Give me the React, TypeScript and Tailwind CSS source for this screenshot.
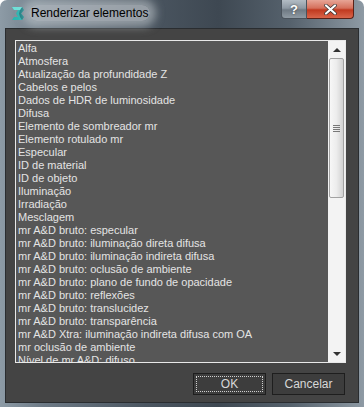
import React from 'react';

const items = [
  'Alfa',
  'Atmosfera',
  'Atualização da profundidade Z',
  'Cabelos e pelos',
  'Dados de HDR de luminosidade',
  'Difusa',
  'Elemento de sombreador mr',
  'Elemento rotulado mr',
  'Especular',
  'ID de material',
  'ID de objeto',
  'Iluminação',
  'Irradiação',
  'Mesclagem',
  'mr A&D bruto: especular',
  'mr A&D bruto: iluminação direta difusa',
  'mr A&D bruto: iluminação indireta difusa',
  'mr A&D bruto: oclusão de ambiente',
  'mr A&D bruto: plano de fundo de opacidade',
  'mr A&D bruto: reflexões',
  'mr A&D bruto: translucidez',
  'mr A&D bruto: transparência',
  'mr A&D Xtra: iluminação indireta difusa com OA',
  'mr oclusão de ambiente',
  'Nível de mr A&D: difuso',
];

function MaxIcon() {
  return (
    <svg width="14" height="15" viewBox="0 0 14 15">
      <polygon points="1,1 11,1 13,4 10,7.5 13,11 11,14 1,14 3,11 7,11 5,7.5 7,4 3,4" fill="#2bb5b0" />
      <polygon points="11,1 13,4 10,7.5 13,11 11,14 9,11 8,7.5 9,4" fill="#147c80" />
      <polygon points="1,1 11,1 9,4 3,4" fill="#6fe0d8" />
    </svg>
  );
}

export default function App() {
  return (
    <div
      className="relative w-[364px] h-[407px] overflow-hidden rounded-t-[7px] bg-[linear-gradient(90deg,#8d9ba6_0%,#6d7a86_12%,#4b5661_40%,#3e4852_60%,#56626d_80%,#8e9aa4_100%)]"
      style={{ fontFamily: '"Liberation Sans", Arial, sans-serif' }}
    >
      {/* title bar */}
      <div className="relative h-[28px] flex items-start">
        <div className="mt-[6px] ml-[11px]">
          <MaxIcon />
        </div>
        <div className="ml-[4px] mt-[5px] px-[2px] text-[12px] leading-[16px] text-black rounded-[8px] bg-[#c9cfd4]/60 shadow-[0_0_8px_6px_rgba(201,207,212,0.55)]">
          Renderizar elementos
        </div>
        <div className="ml-auto mr-[10px] flex">
          <div className="w-[26px] h-[19px] flex items-center justify-center rounded-bl-[4px] border border-[#4a535c] border-t-0 bg-[linear-gradient(180deg,#b3bcc4_0%,#8e99a3_45%,#6f7a84_55%,#8f9aa3_100%)] text-white text-[13px] font-bold leading-none [text-shadow:0_0_2px_#333]">
            ?
          </div>
          <div className="w-[47px] h-[19px] flex items-center justify-center rounded-br-[4px] border border-[#5a2218] border-t-0 border-l-0 bg-[linear-gradient(180deg,#e7a596_0%,#d5705c_45%,#c1391f_55%,#d9654a_100%)]">
            <svg width="13" height="11" viewBox="0 0 13 11">
              <path d="M2 1.5 L11 9.5 M11 1.5 L2 9.5" stroke="#333" strokeWidth="3.6" strokeLinecap="round" />
              <path d="M2 1.5 L11 9.5 M11 1.5 L2 9.5" stroke="#fff" strokeWidth="2.2" strokeLinecap="round" />
            </svg>
          </div>
        </div>
      </div>

      {/* client area */}
      <div className="mx-[5px] h-[375px] border border-[#2a2d30] bg-[#444444] flex flex-col">
        <div className="ml-[9px] mt-[11px] w-[331px] h-[323px] border border-[#e8e8e8] bg-[#575757] flex">
          <div className="flex-1 overflow-hidden pl-[2px] pt-[1px]">
            {items.map((it) => (
              <div key={it} className="h-[13px] text-[11px] leading-[13px] text-[#e4e4e4] whitespace-nowrap">
                {it}
              </div>
            ))}
          </div>
          <div className="w-[17px] bg-[#f3f3f3] flex flex-col">
            <div className="h-[17px] flex items-center justify-center">
              <div className="w-0 h-0 border-l-[4px] border-r-[4px] border-b-[4px] border-l-transparent border-r-transparent border-b-[#333]" />
            </div>
            <div className="mx-[1px] h-[140px] rounded-[2px] border border-[#a2a2a2] bg-[linear-gradient(90deg,#f7f7f7_0%,#ececec_50%,#d2d2d2_100%)] flex items-center justify-center">
              <div className="flex flex-col gap-[1px]">
                <div className="w-[7px] h-[1px] bg-[#777]" />
                <div className="w-[7px] h-[1px] bg-[#777]" />
                <div className="w-[7px] h-[1px] bg-[#777]" />
                <div className="w-[7px] h-[1px] bg-[#777]" />
              </div>
            </div>
            <div className="flex-1" />
            <div className="h-[17px] flex items-center justify-center">
              <div className="w-0 h-0 border-l-[4px] border-r-[4px] border-t-[4px] border-l-transparent border-r-transparent border-t-[#333]" />
            </div>
          </div>
        </div>
        <div className="mt-[10px] ml-[187px] flex gap-[6px]">
          <div className="w-[73px] h-[22px] border border-[#1e1e1e] bg-[#3d3d3d] p-[2px]">
            <div className="w-full h-full border border-dotted border-[#cfcfcf] flex items-center justify-center text-[12px] text-[#d8d8d8]">
              OK
            </div>
          </div>
          <div className="w-[73px] h-[22px] border border-[#1e1e1e] bg-[#3d3d3d] flex items-center justify-center text-[12px] text-[#d8d8d8]">
            Cancelar
          </div>
        </div>
      </div>
    </div>
  );
}
